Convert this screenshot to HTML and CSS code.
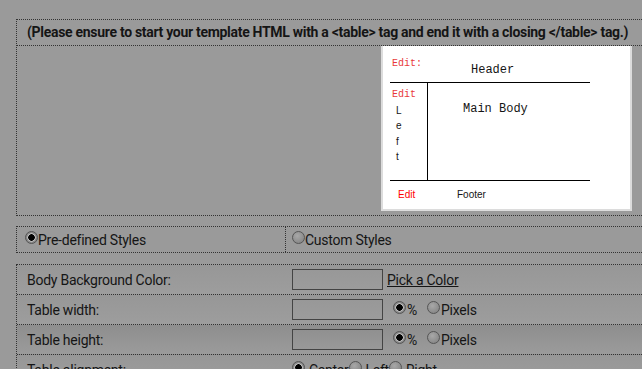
FILE: index.html
```html
<!DOCTYPE html>
<html lang="en">
<head>
  <meta charset="UTF-8" />
  <title>Template Settings</title>
  <link rel="stylesheet" href="styles.css">
</head>
<body>

<div class="page">
  <!-- Template preview -->
  <div class="box">
    <div class="note">(Please ensure to start your template HTML with a &lt;table&gt; tag and end it with a closing &lt;/table&gt; tag.)</div>
    <div class="preview-row">
      <div class="thumb">
        <div class="t-head">
          <span class="t-edit">Edit:</span>
          <span class="t-title">Header</span>
        </div>
        <div class="t-left">
          <span class="t-edit">Edit</span>
          <span class="t-letters">L<br>e<br>f<br>t</span>
        </div>
        <div class="t-main">Main Body</div>
        <div class="t-foot">
          <span class="t-edit2">Edit</span>
          <span class="t-footer">Footer</span>
        </div>
      </div>
    </div>
  </div>

  <!-- Style choice -->
  <div class="box styles">
    <label class="cell"><input type="radio" name="style" checked>Pre-defined Styles</label>
    <label class="cell"><input type="radio" name="style">Custom Styles</label>
  </div>

  <!-- Settings -->
  <div class="box form">
    <div class="row">
      <div class="label">Body Background Color:</div>
      <div class="value"><input type="text" class="field"><a href="#" class="pick">Pick a Color</a></div>
    </div>
    <div class="row">
      <div class="label">Table width:</div>
      <div class="value">
        <input type="text" class="field">
        <label class="opt first"><input type="radio" name="tw" checked>%</label>
        <label class="opt"><input type="radio" name="tw">Pixels</label>
      </div>
    </div>
    <div class="row shade">
      <div class="label">Table height:</div>
      <div class="value">
        <input type="text" class="field">
        <label class="opt first"><input type="radio" name="th" checked>%</label>
        <label class="opt"><input type="radio" name="th">Pixels</label>
      </div>
    </div>
    <div class="row">
      <div class="label">Table alignment:</div>
      <div class="value">
        <label class="opt align"><input type="radio" name="ta" checked><span>Center</span></label>
        <label class="opt align"><input type="radio" name="ta"><span>Left</span></label>
        <label class="opt align"><input type="radio" name="ta"><span>Right</span></label>
      </div>
    </div>
  </div>
</div>

</body>
</html>
```

FILE: styles.css
```css
* {
  margin: 0;
  padding: 0;
  box-sizing: border-box;
}

body {
  font-family: Roboto, 'Liberation Sans', sans-serif;
  font-size: 14px;
  letter-spacing: -0.25px;
  background: #9a9a9a;
  color: #151515;
  overflow: hidden;
  height: 369px;
}

.page {
  padding: 19px 0 0 16px;
  width: 720px;
}

.box {
  border: 1px dotted #333;
  border-right: none;
}

.note {
  height: 26px;
  line-height: 25px;
  padding-left: 10px;
  font-weight: bold;
  letter-spacing: -0.3px;
  border-bottom: 1px dotted #333;
  white-space: nowrap;
}

.preview-row {
  height: 169px;
  padding: 0 0 0 364px;
}

/* thumbnail of the page template */
.thumb {
  width: 251px;
  height: 165px;
  background: #fff;
  border: 2px solid #dcdcdc;
  border-top: none;
  padding: 0 40px 0 7px;
  display: grid;
  grid-template-columns: 38px 1fr;
  grid-template-rows: 37px 97px 1fr;
  font-family: 'Liberation Mono', monospace;
  letter-spacing: 0;
}

.t-head {
  grid-column: 1 / 3;
  border-bottom: 1px solid #000;
  position: relative;
}

.t-edit {
  color: #e8393a;
  font-size: 10px;
  display: block;
  padding: 12px 0 0 2px;
}

.t-title {
  font-size: 12px;
  position: absolute;
  left: 81px;
  top: 17px;
}

.t-left {
  border-right: 1px solid #000;
}

.t-left .t-edit {
  padding-top: 6px;
}

.t-letters {
  display: block;
  font-family: 'Liberation Sans', sans-serif;
  font-size: 10px;
  line-height: 15.3px;
  padding: 3px 0 0 6px;
}

.t-main {
  font-size: 12px;
  padding: 19px 0 0 35px;
}

.t-foot {
  grid-column: 1 / 3;
  border-top: 1px solid #000;
  font-family: 'Liberation Sans', sans-serif;
  font-size: 10px;
  display: flex;
  padding-top: 8px;
}

.t-edit2 {
  color: #f00;
  width: 67px;
  padding-left: 8px;
}

/* style choice row */
.styles {
  margin-top: 10px;
  display: grid;
  grid-template-columns: 268px 1fr;
  height: 27px;
}

.styles .cell {
  display: flex;
  align-items: center;
  padding-left: 8px;
}

.styles .cell + .cell {
  border-left: 1px dotted #333;
  padding-left: 6px;
}

/* radios */
input[type="radio"] {
  appearance: none;
  width: 13px;
  height: 13px;
  border-radius: 50%;
  border: 1px solid #555;
  background: radial-gradient(circle at 40% 35%, #a8a8a8, #7e7e7e);
  margin: -4px 0 0 0;
  flex-shrink: 0;
}

input[type="radio"]:checked {
  background: radial-gradient(circle, #000 0 3px, #bbb 3.5px 4px, #8a8a8a 4.5px);
}

/* settings table */
.form {
  margin-top: 11px;
}

.row {
  display: grid;
  grid-template-columns: 268px 1fr;
  height: 30px;
  border-bottom: 1px dotted #333;
  background: linear-gradient(#979797, #9d9d9d);
}

.row.shade {
  background: linear-gradient(#8e8e8e, #9b9b9b);
}

.label {
  display: flex;
  align-items: center;
  padding-left: 10px;
}

.value {
  display: flex;
  align-items: center;
  padding-left: 7px;
}

.field {
  width: 91px;
  height: 21px;
  border: 1px solid #444;
  background: transparent;
}

.pick {
  color: #151515;
  margin-left: 4px;
}

.opt {
  display: flex;
  align-items: center;
  margin-right: 2px;
}

.opt.first {
  margin-left: 10px;
  margin-right: 10px;
}

.opt input {
  margin-right: 1px;
}

.opt.align {
  margin-right: 0;
}

.opt.align span {
  margin-left: 3px;
}
```
